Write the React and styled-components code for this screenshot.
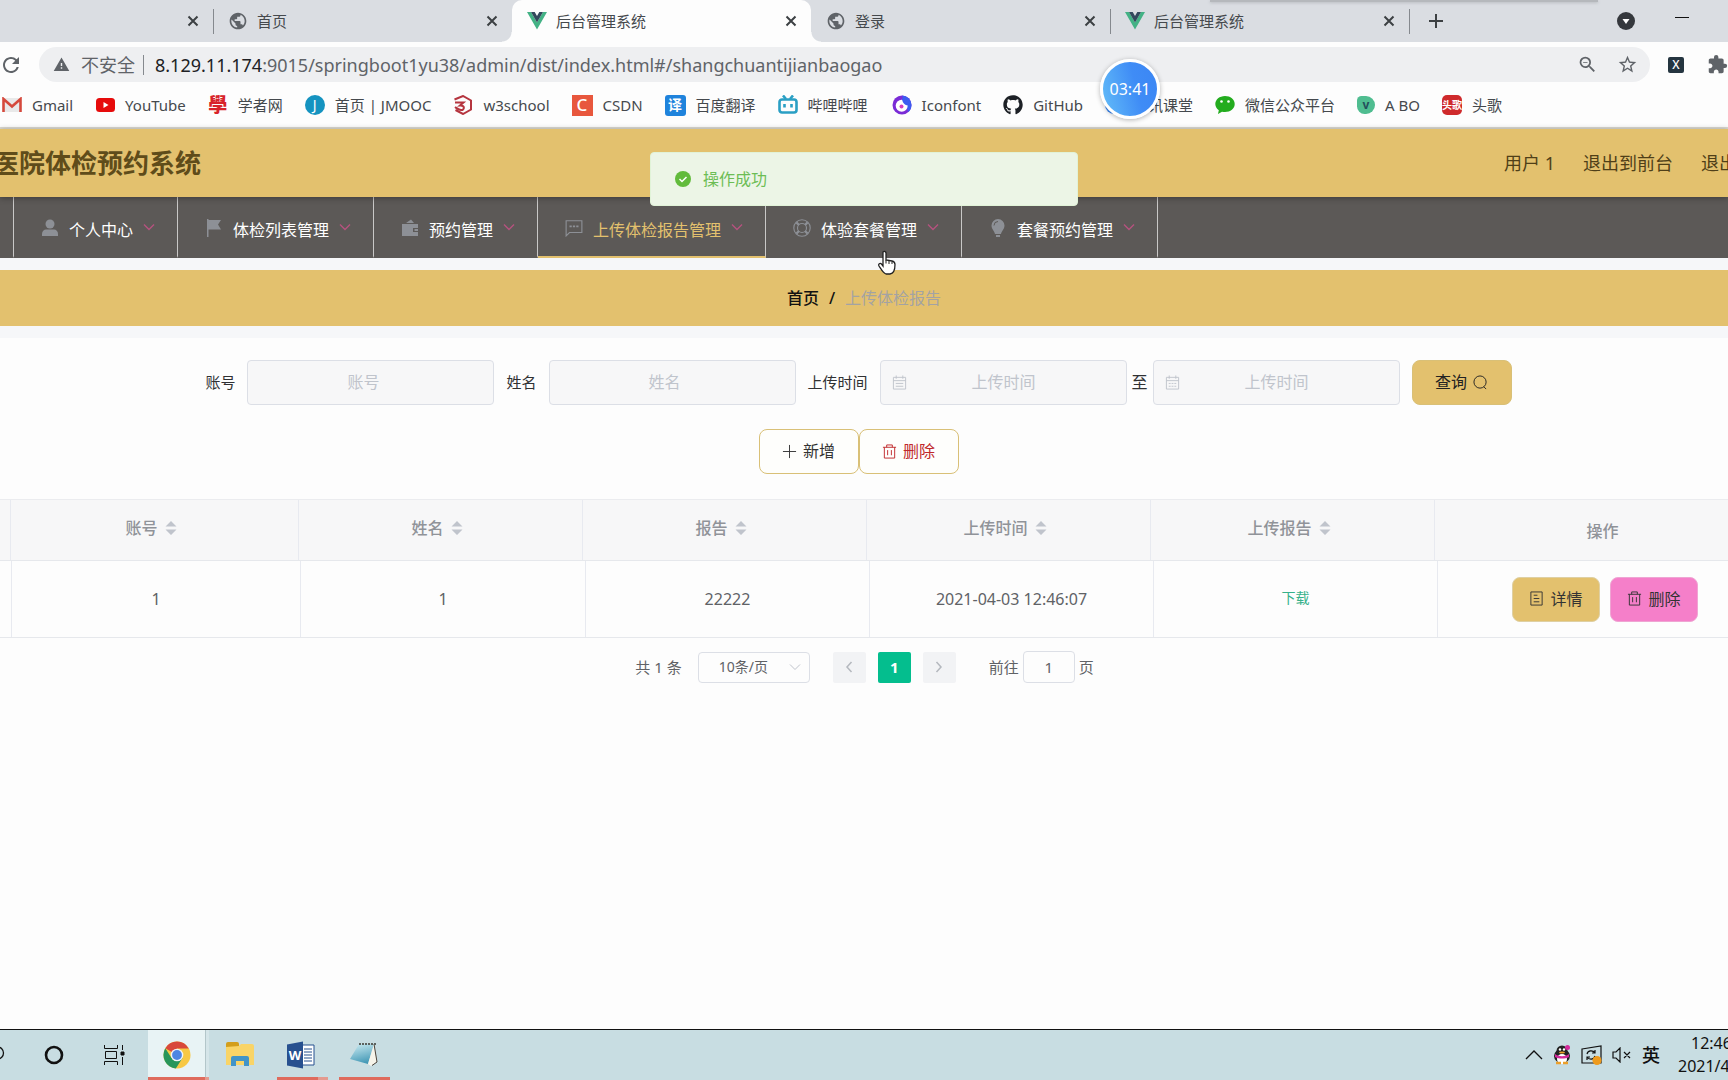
import React from "react";
import styled, { createGlobalStyle, css } from "styled-components";
import {
    MdPublic,
    MdRefresh,
    MdWarning,
    MdStarBorder,
    MdExtension,
    MdOutlineZoomOut,
} from "react-icons/md";
import { FaGithub } from "react-icons/fa";

const GOLD = "#e3c16e";

const GlobalStyle = createGlobalStyle`
    * {
        box-sizing: border-box;
    }
    body {
        margin: 0;
        background-color: #fdfdfd;
        color: #303133;
        font-family: "Noto Sans", "Noto Sans CJK SC", sans-serif;
        font-size: 16px;
        line-height: 20px;
    }
    button, input, select {
        font: inherit;
        color: inherit;
        margin: 0;
    }
    button {
        cursor: pointer;
        padding: 0;
        border: none;
        background: none;
    }
    a {
        color: inherit;
        text-decoration: none;
    }
    svg {
        display: block;
        flex-shrink: 0;
    }
`;

const Screen = styled.div`
    position: relative;
    min-height: 100vh;
    display: flex;
    flex-direction: column;
    overflow: hidden;
    white-space: nowrap;
`;

/* browser window */

const TabStrip = styled.div`
    position: relative;
    display: flex;
    height: 42px;
    background-color: #dadde2;
`;

const WindowShadow = styled.div`
    position: absolute;
    top: 0;
    right: 130px;
    width: 388px;
    height: 2px;
    background-color: #b5b8bc;
    box-shadow: 0 1px 3px #b5b8bc;
`;

const Tab = styled.div`
    position: relative;
    flex: 0 0 299px;
    display: flex;
    align-items: center;
    gap: 9px;
    padding: 0 12px 0 15px;
    font-size: 15px;
    color: #45494d;
    &:first-child {
        margin-left: -86px;
    }
    ${(props) => props.$divider && css`
        &::after {
            content: "";
            position: absolute;
            right: -1px;
            top: 9px;
            height: 25px;
            border-right: 1px solid #85898e;
        }
    `}
    ${(props) => props.$active && css`
        background-color: #fdfdfd;
        border-radius: 10px 10px 0 0;
        &::before, &::after {
            content: "";
            position: absolute;
            bottom: 0;
            width: 10px;
            height: 10px;
        }
        &::before {
            left: -10px;
            background: radial-gradient(circle at 0 0, transparent 9px, #fdfdfd 10px);
        }
        &::after {
            right: -10px;
            background: radial-gradient(circle at 100% 0, transparent 9px, #fdfdfd 10px);
        }
    `}
`;

const TabTitle = styled.span`
    flex: 1;
`;

const IconButton = styled.button`
    display: flex;
    align-items: center;
    justify-content: center;
    width: ${(props) => props.$size || 16}px;
    height: ${(props) => props.$size || 16}px;
    color: ${(props) => props.$color || "#3c4043"};
`;

const StripActions = styled.div`
    flex: 1;
    display: flex;
    align-items: center;
    padding: 0 38px 0 16px;
    gap: 40px;
    button:first-child {
        margin-right: auto;
    }
`;

const AddressRow = styled.div`
    display: flex;
    align-items: center;
    height: 45px;
    gap: 18px;
    background-color: #fdfdfd;
    color: #5f6368;
`;

const AddressBar = styled.div`
    flex: 1;
    display: flex;
    align-items: center;
    height: 35px;
    padding: 0 13px 0 14px;
    border-radius: 18px;
    background-color: #eeeff1;
    font-size: 18px;
`;

const Insecure = styled.span`
    margin: 0 11px 0 11px;
    padding-right: 8px;
    border-right: 1px solid #85898e;
`;

const UrlText = styled.span`
    flex: 1;
    b {
        font-weight: 400;
        color: #202124;
    }
`;

const AddressTools = styled.div`
    display: flex;
    gap: 20px;
`;

const Extensions = styled.div`
    display: flex;
    align-items: center;
    gap: 23px;
    margin-right: 1px;
`;

const Bookmarks = styled.nav`
    display: flex;
    align-items: center;
    gap: 22px;
    height: 42px;
    padding: 0 2px 4px;
    border-bottom: 2px solid #dcdad2;
    background-color: #fdfdfd;
`;

const Bookmark = styled.a`
    display: flex;
    align-items: center;
    gap: 10px;
    font-size: 15px;
    color: #45494d;
`;

const Badge = styled.span`
    display: flex;
    align-items: center;
    justify-content: center;
    flex-shrink: 0;
    width: ${(props) => props.$size || 20}px;
    height: ${(props) => props.$size || 20}px;
    border-radius: ${(props) => props.$radius || "0"};
    background-color: ${(props) => props.$bg || "transparent"};
    color: ${(props) => props.$color || "#fff"};
    font-size: ${(props) => props.$font || 14}px;
    font-weight: ${(props) => props.$weight || 700};
    line-height: 20px;
`;

const Timer = styled.div`
    position: absolute;
    top: 59px;
    left: 1100px;
    width: 60px;
    height: 60px;
    display: flex;
    align-items: center;
    justify-content: center;
    border: 3px solid #fff;
    border-radius: 50%;
    background: linear-gradient(75deg, #63bdf8, #3f8cf6 60%, #3b86f4);
    box-shadow: 0 1px 5px rgba(0, 0, 0, 0.3);
    color: #fff;
    font-size: 16px;
`;

/* admin page */

const Header = styled.header`
    position: relative;
    z-index: 1;
    display: flex;
    align-items: center;
    gap: 28px;
    height: 68px;
    background-color: ${GOLD};
    box-shadow: 0 1px 6px rgba(0, 0, 0, 0.35);
    color: #4f3f18;
    font-size: 18px;
`;

const Title = styled.h1`
    margin: 0 auto 0 -7px;
    font-size: 26px;
    font-weight: 700;
    line-height: 36px;
    color: #5f4c1a;
`;

const Logout = styled.a`
    width: 27px;
    overflow: hidden;
`;

const Menu = styled.nav`
    display: flex;
    height: 61px;
    background-color: #5c5957;
    border-left: 13px solid #5c5957;
`;

const MenuItem = styled.a`
    display: flex;
    align-items: center;
    gap: 10px;
    padding: 6px 22px 0 27px;
    border-right: 1px solid #c9c8c7;
    border-bottom: 2px solid ${(props) => (props.$active ? GOLD : "transparent")};
    color: ${(props) => (props.$active ? GOLD : "#fff")};
    &:first-child {
        border-left: 1px solid #c9c8c7;
    }
    svg {
        margin-bottom: 3px;
        color: #8d9096;
    }
    svg:last-child {
        margin-bottom: 5px;
        color: #b5527f;
    }
`;

const Breadcrumb = styled.nav`
    display: flex;
    align-items: center;
    justify-content: center;
    gap: 10px;
    height: 80px;
    border: solid #f6f7f9;
    border-width: 12px 0;
    background-color: ${GOLD};
    color: #a3a3a3;
    a, b {
        color: #111;
        font-weight: 500;
    }
`;

const Content = styled.main`
    flex: 1;
    background-color: #fdfdfd;
`;

const SearchForm = styled.form`
    display: flex;
    justify-content: center;
    align-items: center;
    gap: 12px;
    padding: 22px 11px 24px 0;
`;

const Label = styled.label`
    padding-bottom: 2px;
    font-size: ${(props) => (props.$inner ? 16 : 15)}px;
`;

const DateRange = styled.div`
    display: flex;
    align-items: center;
    gap: 5px;
`;

const InputWrap = styled.div`
    display: flex;
    align-items: center;
    width: 247px;
    height: 45px;
    padding: 0 ${(props) => (props.$date ? 11 : 29)}px 0 ${(props) => (props.$date ? 11 : 14)}px;
    border: 1px solid #dcdfe6;
    border-radius: 4px;
    background-color: #f7f7f8;
    color: #c0c4cc;
    input {
        flex: 1;
        min-width: 0;
        padding: 0 ${(props) => (props.$date ? 14 : 0)}px 2px 0;
        border: none;
        outline: none;
        background: none;
        text-align: center;
    }
    input::placeholder {
        color: #c0c4cc;
        opacity: 1;
    }
`;

const Button = styled.button`
    display: flex;
    align-items: center;
    justify-content: center;
    gap: 6px;
    width: ${(props) => (props.$small ? 88 : 100)}px;
    height: 45px;
    padding-bottom: 1px;
    border: 1px solid ${(props) => props.$border || "#d9c077"};
    border-radius: 8px;
    background-color: ${(props) => props.$bg || "#fefefc"};
    color: ${(props) => props.$color || "#333"};
`;

const Actions = styled.div`
    display: flex;
    justify-content: center;
    padding: 0 11px 25px 0;
`;

/* the operation column runs past the right edge of the window */
const Table = styled.table`
    display: block;
    width: calc(100% + 43px);
    border-top: 1px solid #ebecef;
    thead, tbody {
        display: block;
    }
    tr {
        display: grid;
        border-bottom: 1px solid #e6e8ec;
    }
    thead tr {
        grid-template-columns: 11px 288fr 284fr 284fr 284fr 284fr 336fr;
        height: 61px;
        background-color: #f7f7f8;
    }
    tbody tr {
        grid-template-columns: 12px 289fr 285fr 284fr 284fr 284fr 333fr;
        height: 77px;
    }
    th, td {
        display: flex;
        align-items: center;
        justify-content: center;
        padding: 0;
        border-right: 1px solid #e8eaf0;
    }
    th {
        color: #909399;
        font-weight: 500;
        padding-bottom: 4px;
    }
    th:last-child {
        padding: 2px 0 0;
    }
    td {
        color: #606266;
    }
    td:last-child {
        padding-left: 2px;
    }
`;

const Sort = styled.button`
    display: flex;
    align-items: center;
    justify-content: center;
    width: 26px;
    color: #c0c4cc;
`;

const Download = styled.a`
    padding-bottom: 2px;
    color: #36b18a;
    font-size: 14px;
`;

const RowActions = styled.div`
    display: flex;
    gap: 10px;
`;

const Pagination = styled.div`
    display: flex;
    justify-content: center;
    align-items: center;
    gap: 12px;
    padding: 13px 0 0 1px;
    color: #606266;
    font-size: 15px;
`;

const PageSize = styled.div`
    display: flex;
    align-items: center;
    width: 112px;
    height: 31px;
    margin: 0 11px 0 4px;
    padding-right: 8px;
    border: 1px solid #dcdfe6;
    border-radius: 4px;
    color: #c0c4cc;
    select {
        flex: 1;
        min-width: 0;
        padding: 0 0 0 20px;
        border: none;
        outline: none;
        appearance: none;
        background: none;
        color: #606266;
        font-size: 14px;
    }
`;

const PageButton = styled.button`
    display: flex;
    align-items: center;
    justify-content: center;
    width: 33px;
    height: 31px;
    border-radius: 2px;
    background-color: ${(props) => (props.$current ? "#04be8e" : "#f2f3f5")};
    color: ${(props) => (props.$current ? "#fff" : "#b4b8be")};
    font-weight: 700;
`;

const Jumper = styled.label`
    display: flex;
    align-items: center;
    gap: 4px;
    margin-left: 21px;
    input {
        width: 52px;
        height: 32px;
        padding: 0;
        border: 1px solid #dcdfe6;
        border-radius: 4px;
        background: none;
        text-align: center;
    }
`;

const Message = styled.div`
    position: absolute;
    z-index: 2;
    top: 152px;
    left: calc(50% - 214px);
    width: 428px;
    height: 54px;
    display: flex;
    align-items: center;
    gap: 12px;
    padding-left: 24px;
    border: 1px solid #e1f3d8;
    border-radius: 4px;
    background-color: #ecf5e6;
    color: #6cbd55;
`;

const Cursor = styled.svg`
    position: absolute;
    z-index: 3;
    top: 250px;
    left: 877px;
`;

/* windows taskbar */

const Taskbar = styled.footer`
    display: flex;
    height: 51px;
    border-top: 1px solid #111;
    background-color: #c8dde2;
    color: #111;
`;

const TaskButton = styled.button`
    display: flex;
    align-items: center;
    justify-content: center;
    width: ${(props) => props.$width}px;
    margin-right: ${(props) => props.$after || 0}px;
    padding: 2px 0 0 ${(props) => props.$indent || 0}px;
    border-bottom: 3px solid ${(props) => (props.$open ? "#df6b5d" : "transparent")};
    background-color: ${(props) => (props.$focus ? "#e8f3f5" : "transparent")};
`;

/* edge of the next window in a grouped taskbar button */
const Stack = styled.span`
    width: ${(props) => props.$width}px;
    margin-right: ${(props) => props.$after}px;
    border-bottom: 3px solid #e49a8f;
    background-color: ${(props) => props.$bg || "transparent"};
    box-shadow: ${(props) => (props.$bg ? "inset 1px 0 0 #b3c6ca" : "none")};
`;

const Tray = styled.div`
    display: flex;
    align-items: center;
    gap: 10px;
    margin-left: auto;
`;

const Ime = styled.button`
    font-size: 18px;
    font-weight: 500;
`;

const Clock = styled.div`
    width: 50px;
    margin-left: 8px;
    overflow: hidden;
    font-size: 16px;
    line-height: 23px;
    div:first-child {
        padding-left: 13px;
    }
`;

/* icons */

const Close = () => (
    <svg width="12" height="12" viewBox="0 0 12 12" stroke="currentColor" strokeWidth="2">
        <path d="M1.500 1.500l9 9M10.500 1.500l-9 9" />
    </svg>
);

const Plus = () => (
    <svg width="16" height="16" viewBox="0 0 16 16" stroke="currentColor" strokeWidth="2">
        <path d="M8 1v14M1 8h14" />
    </svg>
);

const Vue = () => (
    <svg width="20" height="18" viewBox="0 0 20 18">
        <path d="M0 0h4l6 10.4L16 0h4L10 17.5z" fill="#43b285" />
        <path d="M4 0h3.700L10 4l2.300-4H16l-6 10.400z" fill="#33495d" />
    </svg>
);

const Chevron = ({ size = 12, dir = "down", width = 1 }) => {
    const paths = {
        down: "M1 3.500l5 5 5-5",
        left: "M8.500 1l-4.500 5 4.500 5",
        right: "M3.500 1l4.500 5-4.500 5",
    };
    return (
        <svg width={size} height={size} viewBox="0 0 12 12" fill="none" stroke="currentColor" strokeWidth={width}>
            <path d={paths[dir]} />
        </svg>
    );
};

const Line = ({ size = 15, children, width = 1 }) => (
    <svg width={size} height={size} viewBox="0 0 16 16" fill="none" stroke="currentColor" strokeWidth={width}>
        {children}
    </svg>
);

const Solid = ({ children }) => (
    <svg width="18" height="18" viewBox="0 0 18 18" fill="currentColor">
        {children}
    </svg>
);

const Trash = () => (
    <Line>
        <path d="M1 3.500h14M5 3.500V1h6v2.500M2.500 3.500V15h11V3.500M6 6.500v5.500M10 6.500v5.500" />
    </Line>
);

const Calendar = ({ dots }) => (
    <Line>
        <path d="M1.500 2.500h13v12.500h-13zM1.500 6h13M4.500 0.500v3.500M11.500 0.500v3.500" />
        <path d="M4 9h8M4 12h8" strokeDasharray={dots ? "2 1" : "none"} />
    </Line>
);

const Gmail = () => (
    <svg width="20" height="16" viewBox="0 0 20 16">
        <path d="M1 1h18v14H1z" fill="#e9e9e9" />
        <path d="M1.500 15V2L10 9.500 18.500 2v13" fill="none" stroke="#d5493c" strokeWidth="2.600" />
    </svg>
);

const Youtube = () => (
    <svg width="19" height="14" viewBox="0 0 19 14">
        <rect width="19" height="14" rx="3.500" fill="#e60b0b" />
        <path d="M7.500 4v6l5-3z" fill="#fff" />
    </svg>
);

const W3 = () => (
    <svg width="20" height="20" viewBox="0 0 20 20" fill="none" stroke="#b5353f" strokeWidth="2">
        <path d="M1.500 4.500L10 1l8 4.500v9L10 19l-7.500-4" />
        <path d="M2 7.500h8.500l-3.500 3c5.500-.5 4.500 5 1 4.500-2.500 0-4-1.500-6-3" />
    </svg>
);

const Bilibili = () => (
    <svg width="20" height="20" viewBox="0 0 20 20" fill="none" stroke="#2a9fc4" strokeWidth="2.600">
        <rect x="1.500" y="4.500" width="17" height="13" rx="2.500" />
        <path d="M5 0.500l3 3.500M15 .5L12 4" />
        <path d="M6.500 9v3.500M13.500 9v3.500" />
    </svg>
);

const Iconfont = () => (
    <svg width="22" height="20" viewBox="0 0 22 20">
        <circle cx="12" cy="10" r="9.500" fill="#7a2bd6" />
        <path d="M12 .5a9.500 9.500 0 0 1 9.500 9.500c0 3-1.500 5.500-3 7z" fill="#3c5cf0" />
        <circle cx="11.700" cy="10.700" r="6" fill="#fff" />
        <path d="M12 3c0 4 2 7 6 7.500L19 6z" fill="#3c5cf0" />
        <circle cx="11.500" cy="11.500" r="2" fill="#d43fc0" />
    </svg>
);

const Wechat = () => (
    <svg width="20" height="20" viewBox="0 0 20 20">
        <path d="M10 1C4.500 1 .3 4.600.3 9c0 2.600 1.400 4.800 3.500 6.200L3 19l4-2.300c1 .2 2 .3 3 .3 5.500 0 9.700-3.500 9.700-8S15.500 1 10 1z" fill="#23ac1e" />
        <circle cx="6.500" cy="6.500" r="1.300" fill="#fff" />
        <circle cx="13.500" cy="6.500" r="1.300" fill="#fff" />
    </svg>
);

const Chrome = () => (
    <svg width="28" height="28" viewBox="0 0 28 28">
        <circle cx="14" cy="14" r="13.500" fill="#f7c844" />
        <path d="M14 14L2.300 7.200A13.500 13.500 0 0 1 25.700 7.500H14z" fill="#d8483b" />
        <path d="M2.300 7.200a13.500 13.500 0 0 0 10.500 20.300L19.500 17 8.500 17z" fill="#27965a" />
        <circle cx="14" cy="14" r="6.300" fill="#f1f4f6" />
        <circle cx="14" cy="14" r="4.900" fill="#4d86e2" />
    </svg>
);

const Folder = () => (
    <svg width="28" height="25" viewBox="0 0 28 25">
        <path d="M0 2a2 2 0 0 1 2-2h9a2 2 0 0 1 2 2v3H0z" fill="#d39e1c" />
        <path d="M0 5l13-1 2-2h11a2 2 0 0 1 2 2v19H0z" fill="#f9d467" />
        <path d="M5 24v-8a2 2 0 0 1 2-2h14a2 2 0 0 1 2 2v8h-5v-5h-8v5z" fill="#4194c8" />
    </svg>
);

const Word = () => (
    <svg width="28" height="28" viewBox="0 0 28 28">
        <path d="M15 4h12v20H15z" fill="#fff" stroke="#27508f" />
        <path d="M17 8h8M17 11h8M17 14h8M17 17h8M17 20h8" stroke="#27508f" />
        <path d="M0 3.500L16 .5v27l-16-3z" fill="#27508f" />
        <text x="8" y="19" textAnchor="middle" fill="#fff" fontSize="13" fontWeight="700">W</text>
    </svg>
);

const Notepad = () => (
    <svg width="30" height="28" viewBox="0 0 30 28">
        <defs>
            <linearGradient id="cover" x1="0.300" y1="0" x2="0.600" y2="1">
                <stop offset="0" stopColor="#c3e6ee" />
                <stop offset="1" stopColor="#3f96b4" />
            </linearGradient>
        </defs>
        <path d="M9 3h15l-6 20L0 18z" fill="url(#cover)" />
        <path d="M24 3l3 18-6 4-3-2z" fill="#f6f4ea" />
        <path d="M24 3l3 18-5 3.500" fill="none" stroke="#4b4238" />
        <path d="M9 3h17" stroke="#5c625f" strokeWidth="2" strokeDasharray="2 1" />
    </svg>
);

const Penguin = () => (
    <svg width="18" height="20" viewBox="0 0 18 20">
        <ellipse cx="9" cy="11" rx="8" ry="7" fill="#222" />
        <circle cx="9" cy="6" r="5.500" fill="#222" />
        <ellipse cx="9" cy="14" rx="5" ry="5" fill="#fff" />
        <path d="M2 9c4 3 10 3 14 0v3c-4 2-10 2-14 0z" fill="#d42a9b" />
        <circle cx="7" cy="4.500" r="1.200" fill="#fff" />
        <circle cx="11" cy="4.500" r="1.200" fill="#fff" />
        <ellipse cx="9" cy="7.500" rx="3" ry="1" fill="#eba02b" />
        <circle cx="14.500" cy="2.500" r="2.500" fill="#d42a9b" />
        <path d="M3 18h5M10 18h5" stroke="#eba02b" strokeWidth="2.500" />
    </svg>
);

const tabs = [
    { id: 0, title: "" },
    { id: 1, title: "首页", icon: <MdPublic size={20} color="#5f6368" /> },
    { id: 2, title: "后台管理系统", icon: <Vue />, active: true },
    { id: 3, title: "登录", icon: <MdPublic size={20} color="#5f6368" /> },
    { id: 4, title: "后台管理系统", icon: <Vue /> },
];

const bookmarks = [
    { name: "Gmail", icon: <Gmail /> },
    { name: "YouTube", icon: <Badge><Youtube /></Badge> },
    { name: "学者网", icon: <Badge $color="#d8232a" $font={19} $weight={900}>學</Badge> },
    { name: "首页 | JMOOC", icon: <Badge $bg="#1593c0" $radius="50%" $weight={400}>J</Badge> },
    { name: "w3school", icon: <W3 /> },
    { name: "CSDN", icon: <Badge $size={21} $bg="#e8573d" $font={17} $weight={500}>C</Badge> },
    { name: "百度翻译", icon: <Badge $size={21} $bg="#1f83dc" $radius="3px">译</Badge> },
    { name: "哔哩哔哩", icon: <Bilibili /> },
    { name: "Iconfont", icon: <Iconfont /> },
    { name: "GitHub", icon: <FaGithub size={20} color="#1d2126" /> },
    { name: "腾讯课堂", icon: <Badge $size={18} $bg="#3f8cf6" $radius="50%" /> },
    { name: "微信公众平台", icon: <Wechat /> },
    { name: "A BO", icon: <Badge $size={18} $bg="#4fbd90" $radius="30% 60% 60% 50%" $color="#24505c" $font={12}>v</Badge> },
    { name: "头歌", icon: <Badge $bg="#cf2a2c" $radius="5px" $font={10}>头歌</Badge> },
];

const menus = [
    {
        name: "个人中心",
        icon: <Solid><circle cx="9" cy="5" r="4.500" /><path d="M1 17v-2c0-3 2-4.500 4-4.500h8c2 0 4 1.500 4 4.500v2z" /></Solid>,
    },
    {
        name: "体检列表管理",
        icon: <Solid><path d="M2 0h1.500v18H2zM3.500 1H16l-3 4.500 3 5H3.500z" /></Solid>,
    },
    {
        name: "预约管理",
        icon: <Solid><path d="M1 5h16v4h-5v4h5v4H1zM5 4l5-3.500L13 4zM13.500 10H17v2h-3.500z" /></Solid>,
    },
    {
        name: "上传体检报告管理",
        icon: <Line size={18}><path d="M1 1.500h14v10.500H4L1 15z" /><path d="M4 6.500h2M7 6.500h2M10 6.500h2" strokeWidth="1.500" /></Line>,
        active: true,
    },
    {
        name: "体验套餐管理",
        icon: <Line size={18}><circle cx="8" cy="8" r="7.300" /><circle cx="8" cy="8" r="4" /><path d="M3 3l2.300 2.300M13 3l-2.300 2.300M3 13l2.300-2.300M13 13l-2.300-2.300" strokeWidth="2" /></Line>,
    },
    {
        name: "套餐预约管理",
        icon: <Solid><path d="M9 0a6.500 6.500 0 0 0-6.500 6.500c0 3.500 3 5.500 3.500 8.500h6c.5-3 3.500-5 3.500-8.500A6.500 6.500 0 0 0 9 0zM7 16h4v2H7z" /><path d="M5 6.500A4 4 0 0 1 9 2.500" fill="none" stroke="#5c5957" /></Solid>,
    },
];

const columns = ["账号", "姓名", "报告", "上传时间", "上传报告"];

const rows = [{ id: 1, account: "1", name: "1", report: "22222", time: "2021-04-03 12:46:07" }];

function BrowserWindow() {
    return (
        <>
            <TabStrip>
                {tabs.map((tab, i) => (
                    <Tab key={tab.id} $active={tab.active} $divider={i === 0 || i > 2}>
                        {tab.icon}
                        <TabTitle>{tab.title}</TabTitle>
                        <IconButton aria-label="关闭"><Close /></IconButton>
                    </Tab>
                ))}
                <StripActions>
                    <IconButton $size={22} aria-label="新标签页"><Plus /></IconButton>
                    <IconButton aria-label="搜索标签页">
                        <svg width="18" height="18" viewBox="0 0 18 18">
                            <circle cx="9" cy="9" r="9" fill="#35383d" />
                            <path d="M5.500 7h7L9 12z" fill="#fff" />
                        </svg>
                    </IconButton>
                    <IconButton aria-label="最小化">
                        <svg width="14" height="10" viewBox="0 0 14 10"><path d="M0 1.500h14" stroke="#111" /></svg>
                    </IconButton>
                </StripActions>
                <WindowShadow />
            </TabStrip>
            <AddressRow>
                <IconButton $size={21} $color="#5f6368" aria-label="刷新"><MdRefresh size={24} /></IconButton>
                <AddressBar>
                    <MdWarning size={17} />
                    <Insecure>不安全</Insecure>
                    <UrlText><b>8.129.11.174</b>:9015/springboot1yu38/admin/dist/index.html#/shangchuantijianbaogao</UrlText>
                    <AddressTools>
                        <IconButton $size={20} $color="#5f6368" aria-label="缩放"><MdOutlineZoomOut size={21} /></IconButton>
                        <IconButton $size={20} $color="#5f6368" aria-label="收藏"><MdStarBorder size={21} /></IconButton>
                    </AddressTools>
                </AddressBar>
                <Extensions>
                    <Badge $size={16} $bg="#253540" $radius="2px" $font={12} $weight={500}>X</Badge>
                    <IconButton $size={20} $color="#5f6368" aria-label="扩展程序"><MdExtension size={21} /></IconButton>
                </Extensions>
            </AddressRow>
            <Bookmarks>
                {bookmarks.map((item) => (
                    <Bookmark key={item.name} href="#">
                        {item.icon}
                        {item.name}
                    </Bookmark>
                ))}
            </Bookmarks>
            <Timer>03:41</Timer>
        </>
    );
}

function Search() {
    return (
        <SearchForm onSubmit={(e) => e.preventDefault()}>
            <Label htmlFor="account">账号</Label>
            <InputWrap><input id="account" placeholder="账号" /></InputWrap>
            <Label htmlFor="name">姓名</Label>
            <InputWrap><input id="name" placeholder="姓名" /></InputWrap>
            <Label htmlFor="start">上传时间</Label>
            <DateRange>
                <InputWrap $date><Calendar /><input id="start" placeholder="上传时间" /></InputWrap>
                <Label htmlFor="end" $inner>至</Label>
                <InputWrap $date><Calendar dots /><input id="end" placeholder="上传时间" /></InputWrap>
            </DateRange>
            <Button type="submit" $bg={GOLD} $color="#222">
                查询
                <Line><circle cx="7.500" cy="7.500" r="6.500" /><path d="M11.500 12.500L14 15" /></Line>
            </Button>
        </SearchForm>
    );
}

function ReportTable() {
    return (
        <Table>
            <thead>
                <tr>
                    <th />
                    {columns.map((name) => (
                        <th key={name}>
                            {name}
                            <Sort aria-label="排序">
                                <svg width="12" height="14" viewBox="0 0 12 14" fill="currentColor">
                                    <path d="M6 0l5.500 5.500H.5zM6 14L.5 8.500h11z" />
                                </svg>
                            </Sort>
                        </th>
                    ))}
                    <th>操作</th>
                </tr>
            </thead>
            <tbody>
                {rows.map((row) => (
                    <tr key={row.id}>
                        <td />
                        <td>{row.account}</td>
                        <td>{row.name}</td>
                        <td>{row.report}</td>
                        <td>{row.time}</td>
                        <td><Download href="#">下载</Download></td>
                        <td>
                            <RowActions>
                                <Button $small $bg={GOLD} $border="#dfd0a3">
                                    <Line><path d="M2 1h12v14H2zM5 4.500h4M5 8h6M5 11.500h6" /></Line>
                                    详情
                                </Button>
                                <Button $small $bg="#f57fc9" $border="#efa5d3">
                                    <Trash />
                                    删除
                                </Button>
                            </RowActions>
                        </td>
                    </tr>
                ))}
            </tbody>
        </Table>
    );
}

function WindowsTaskbar() {
    return (
        <Taskbar>
            <TaskButton $width={27} aria-label="搜索">
                <svg width="27" height="20" viewBox="0 0 27 20"><circle cx="-2.500" cy="8" r="6" fill="none" stroke="#111" strokeWidth="1.300" /></svg>
            </TaskButton>
            <TaskButton $width={54} aria-label="Cortana">
                <svg width="20" height="20" viewBox="0 0 20 20"><circle cx="10" cy="10" r="8" fill="none" stroke="#111" strokeWidth="2.600" /></svg>
            </TaskButton>
            <TaskButton $width={67} aria-label="任务视图">
                <svg width="22" height="20" viewBox="0 0 22 20" fill="none" stroke="#111">
                    <path d="M.5 0v3.500h13V0M.5 20v-3.500h13V20M1.500 6.500h11v7h-11zM18.500 0v5M18.500 12v8" />
                    <path d="M17 7h3v3h-3z" fill="#111" />
                </svg>
            </TaskButton>
            <TaskButton $width={57} $open $focus aria-label="Chrome"><Chrome /></TaskButton>
            <Stack $width={4} $after={4} $bg="#d5e5e9" />
            <TaskButton $width={54} $after={10} aria-label="文件资源管理器"><Folder /></TaskButton>
            <TaskButton $width={41} $indent={7} $open aria-label="Word"><Word /></TaskButton>
            <Stack $width={10} $after={11} />
            <TaskButton $width={51} $open aria-label="记事本"><Notepad /></TaskButton>
            <Tray>
                <svg width="18" height="10" viewBox="0 0 18 10" fill="none" stroke="#111" strokeWidth="1.300"><path d="M1 9l8-8 8 8" /></svg>
                <Penguin />
                <svg width="21" height="20" viewBox="0 0 21 20" fill="none" stroke="#111" strokeWidth="1.200">
                    <path d="M1 4l19-3v17H1z" />
                    <path d="M6 9c1-4 6-4 8-1M14 5v3h-3M14 11c-1 4-6 4-8 1M6 15v-3h3" />
                    <circle cx="16" cy="15.500" r="4.500" fill="#ee9a1c" stroke="none" />
                </svg>
                <svg width="20" height="16" viewBox="0 0 20 16" fill="none" stroke="#111" strokeWidth="1.200">
                    <path d="M1 5h3l4-4v14l-4-4H1zM12 5l6 6M18 5l-6 6" />
                </svg>
                <Ime>英</Ime>
                <Clock>
                    <div>12:46</div>
                    <div>2021/4</div>
                </Clock>
            </Tray>
        </Taskbar>
    );
}

function App() {
    return (
        <Screen>
            <GlobalStyle />
            <BrowserWindow />
            <Header>
                <Title>医院体检预约系统</Title>
                <span>用户 1</span>
                <a href="#">退出到前台</a>
                <Logout href="#">退出</Logout>
            </Header>
            <Menu>
                {menus.map((menu) => (
                    <MenuItem key={menu.name} href="#" $active={menu.active}>
                        {menu.icon}
                        {menu.name}
                        <Chevron width={1.4} />
                    </MenuItem>
                ))}
            </Menu>
            <Breadcrumb>
                <a href="#">首页</a>
                <b>/</b>
                <span>上传体检报告</span>
            </Breadcrumb>
            <Content>
                <Search />
                <Actions>
                    <Button>
                        <Line><path d="M8 1v14M1 8h14" /></Line>
                        新增
                    </Button>
                    <Button $color="#c0282b">
                        <Trash />
                        删除
                    </Button>
                </Actions>
                <ReportTable />
                <Pagination>
                    <span>共 1 条</span>
                    <PageSize>
                        <select aria-label="每页条数" defaultValue="10">
                            <option value="10">10条/页</option>
                            <option value="20">20条/页</option>
                        </select>
                        <Chevron />
                    </PageSize>
                    <PageButton aria-label="上一页"><Chevron dir="left" width={1.5} /></PageButton>
                    <PageButton $current>1</PageButton>
                    <PageButton aria-label="下一页"><Chevron dir="right" width={1.5} /></PageButton>
                    <Jumper>
                        前往
                        <input defaultValue="1" />
                        页
                    </Jumper>
                </Pagination>
            </Content>
            <WindowsTaskbar />
            <Message>
                <svg width="16" height="16" viewBox="0 0 16 16">
                    <circle cx="8" cy="8" r="8" fill="#62bb3c" />
                    <path d="M4.500 8l2.500 2.500L11.500 6" fill="none" stroke="#fff" strokeWidth="1.500" />
                </svg>
                操作成功
            </Message>
            <Cursor width="20" height="25" viewBox="0 0 20 25">
                <path
                    d="M6 2c1.500-1.500 3 0 3 1v7l6 1c2 .5 3 1.500 3 3.500 0 4-1 9-5 9.500H9c-3-1-5-5-7-8-1-2 1-3.500 2.500-2L6 16z"
                    fill="#fff"
                    stroke="#222"
                    strokeWidth="1.300"
                />
                <path d="M9 10v3.500M12 10.500V14M15 11.500V14" stroke="#222" />
            </Cursor>
        </Screen>
    );
}

export default App;
